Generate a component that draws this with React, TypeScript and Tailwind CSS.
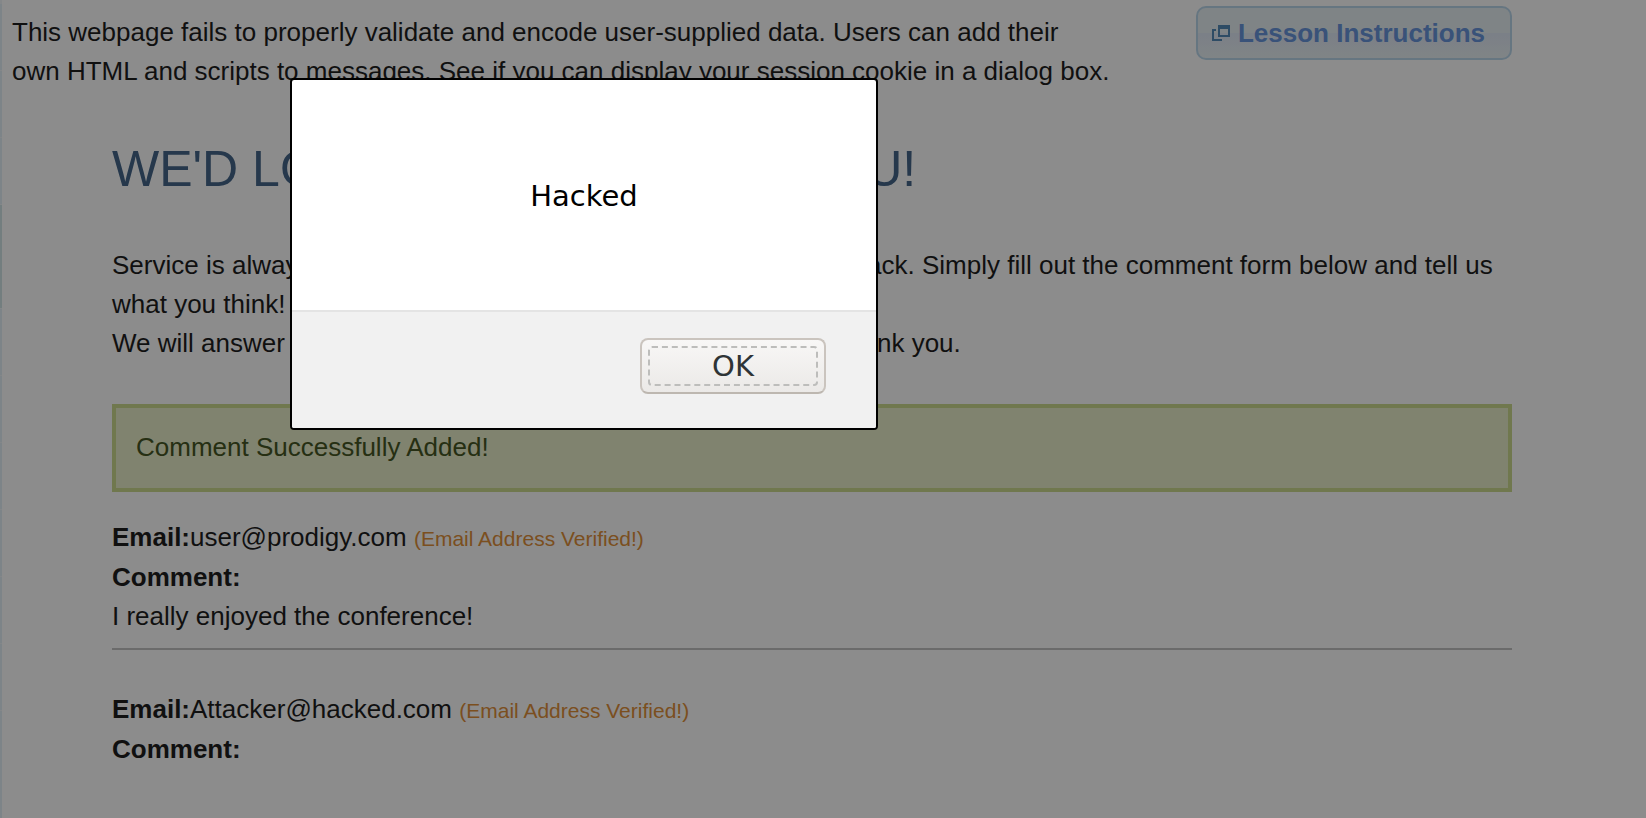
type Entry = { email: string; comment: string };

const entries: Entry[] = [
  { email: 'user@prodigy.com', comment: 'I really enjoyed the conference!' },
  { email: 'Attacker@hacked.com', comment: '' },
];

const navHeights = [
  'h-[66px] bg-[#e4f0f8]',
  'h-[66px] bg-[#e4f0f8]',
  'h-[66px] bg-[#e4f0f8]',
  'h-[103px] bg-[#d2e6e8]',
  'h-[66px] bg-[#e4f0f8]',
  'h-[66px] bg-[#e4f0f8]',
  'h-[66px] bg-[#e4f0f8]',
  'h-[66px] bg-[#e4f0f8]',
  'h-[66px] bg-[#e4f0f8]',
  'h-[66px] bg-[#e4f0f8]',
  'grow bg-[#e4f0f8]',
];

function PopupIcon() {
  return (
    <svg width="18" height="16" viewBox="0 0 18 16" aria-hidden="true" className="shrink-0">
      <path fill="#558bb8" fillRule="evenodd" d="M6 0h12v12H6zM8 4v6h8V4z" />
      <path fill="#558bb8" d="M0 4h4v2H2v8h8v2H0z" />
    </svg>
  );
}

function SideStrip() {
  return (
    <div className="flex w-[2px] shrink-0 flex-col gap-px bg-[#f0f6fa] pt-1">
      {navHeights.map((style, i) => (
        <div key={i} className={style} />
      ))}
    </div>
  );
}

function CommentEntry({ entry }: { entry: Entry }) {
  return (
    <article>
      <p>
        <b>Email:</b>
        {entry.email} <span className="text-[21px] text-[#e1903a]">(Email Address Verified!)</span>
      </p>
      <p>
        <b>Comment:</b>
      </p>
      {entry.comment && <p>{entry.comment}</p>}
    </article>
  );
}

function AlertDialog() {
  return (
    <div className="fixed inset-0 bg-black/45 pt-[78px] pl-[290px]">
      <div
        role="alertdialog"
        aria-modal="true"
        aria-describedby="alert-message"
        className="flex w-[588px] flex-col overflow-hidden rounded-[4px] border-2 border-black bg-white font-['DejaVu_Sans',sans-serif]"
      >
        <p id="alert-message" className="flex h-[230px] items-center justify-center pt-0.5 text-[29px] text-black">
          Hacked
        </p>
        <div className="flex justify-end border-t-2 border-[#e4e4e4] bg-[#f1f1f1] pt-[26px] pr-[50px] pb-[34px]">
          <button
            type="button"
            className="h-14 w-[186px] rounded-lg border-2 border-[#cac4be] border-b-[#bdb7b0] bg-linear-to-b from-[#f8f7f6] to-[#ebe9e7] p-1.5 text-[29px] text-[#2e3436]"
          >
            <span className="flex h-full items-center justify-center rounded-[4px] border-2 border-dashed border-[#bdbdbb]">
              OK
            </span>
          </button>
        </div>
      </div>
    </div>
  );
}

export default function App() {
  return (
    <div className="flex min-h-screen bg-white font-['Liberation_Sans',Arial,sans-serif] text-[26px] leading-[39px] text-[#1e1e1e]">
      <SideStrip />
      <main className="grow pr-[134px] pl-[10px]">
        <header className="flex items-start justify-between">
          <p className="max-w-[1124px] pt-[13px]">
            This webpage fails to properly validate and encode user-supplied data. Users can add their
            <br />
            own HTML and scripts to messages. See if you can display your session cookie in a dialog box.
          </p>
          <a
            href="#instructions"
            className="mt-[6px] flex h-[54px] shrink-0 items-center gap-2 rounded-[10px] border-2 border-[#bbd7ec] bg-[linear-gradient(#e7f0f5_50%,#e0e9f6_50%,#e9f1f5)] pr-[25px] pl-[14px] font-bold text-[#6895dc]"
          >
            <PopupIcon />
            Lesson Instructions
          </a>
        </header>
        <div className="pl-[100px]">
          <h1 className="mt-12 text-[50px] leading-[60px] text-[#45668a]">WE'D LOVE TO HEAR FROM YOU!</h1>
          <p className="mt-[47px]">
            Service is always our number one focus and we'd love your feedback. Simply fill out the comment form below and tell us
            <br />
            what you think!
            <br />
            We will answer all your questions as soon as we possibly can. Thank you.
          </p>
          <div role="status" className="mt-[41px] h-[88px] border-4 border-[#ccda8e] bg-[#e9eeca] p-5 text-[#455724]">
            Comment Successfully Added!
          </div>
          <section className="mt-[26px]">
            <CommentEntry entry={entries[0]} />
            <hr className="mt-3 mb-10 border-t-2 border-[#c3c3c3]" />
            <CommentEntry entry={entries[1]} />
          </section>
        </div>
      </main>
      <AlertDialog />
    </div>
  );
}
